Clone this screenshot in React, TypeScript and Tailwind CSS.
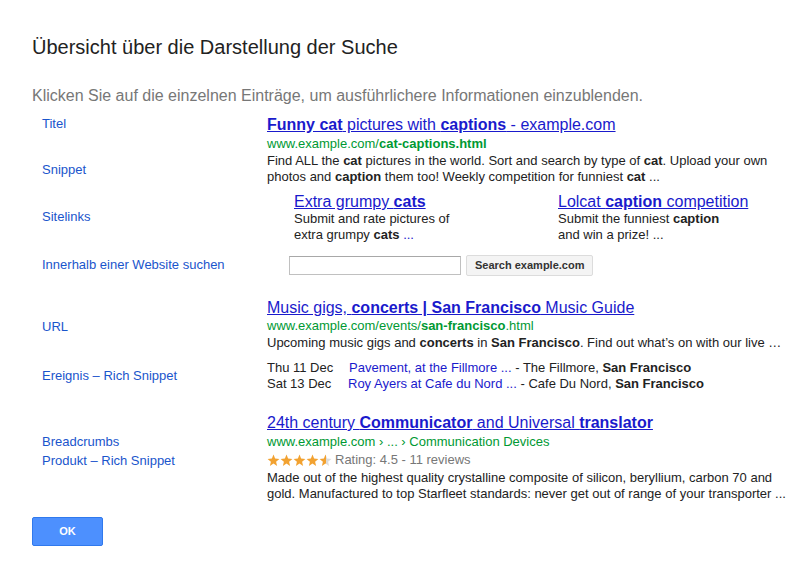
import React from "react"

const font = { fontFamily: '"Liberation Sans", Arial, sans-serif' }

function Star({ fill }: { fill: "full" | "half" | "empty" }) {
  const id = "half-grad"
  const path =
    "M6.5 0.6 L8.1 4.6 L12.4 4.9 L9.1 7.7 L10.1 11.9 L6.5 9.6 L2.9 11.9 L3.9 7.7 L0.6 4.9 L4.9 4.6 Z"
  return (
    <svg width="13" height="12" viewBox="0 0 13 12" className="block">
      {fill === "half" && (
        <defs>
          <linearGradient id={id} x1="0" x2="1" y1="0" y2="0">
            <stop offset="55%" stopColor="#f2a231" />
            <stop offset="55%" stopColor="#dcdcdc" />
          </linearGradient>
        </defs>
      )}
      <path
        d={path}
        fill={fill === "full" ? "#f2a231" : fill === "half" ? `url(#${id})` : "#dcdcdc"}
      />
    </svg>
  )
}

function Label({ children, className = "" }: { children: React.ReactNode; className?: string }) {
  return (
    <div className={`text-[13px] leading-[16px] text-[#1a55cc] whitespace-nowrap ${className}`}>
      {children}
    </div>
  )
}

export default function App() {
  return (
    <div className="w-[802px] h-[580px] bg-white text-[#222] overflow-hidden" style={font}>
      <div className="pl-[32px] pt-[35px]">
        <h1 className="text-[20px] leading-[24px] text-[#222]">
          Übersicht über die Darstellung der Suche
        </h1>
        <p className="mt-[27px] text-[16px] leading-[20px] text-[#777]">
          Klicken Sie auf die einzelnen Einträge, um ausführlichere Informationen einzublenden.
        </p>
      </div>

      <div className="flex mt-[9px]">
        {/* left labels */}
        <div className="w-[267px] pl-[42px] pt-[1px] shrink-0">
          <Label>Titel</Label>
          <Label className="mt-[30px]">Snippet</Label>
          <Label className="mt-[31px]">Sitelinks</Label>
          <Label className="mt-[32px]">Innerhalb einer Website suchen</Label>
          <Label className="mt-[46px]">URL</Label>
          <Label className="mt-[33px]">Ereignis – Rich Snippet</Label>
          <Label className="mt-[50px]">Breadcrumbs</Label>
          <Label className="mt-[3px]">Produkt – Rich Snippet</Label>
        </div>

        {/* right results */}
        <div className="w-[530px] shrink-0">
          {/* result 1 */}
          <a className="block text-[16px] leading-[20px] text-[#1a1acc] underline whitespace-nowrap">
            <b>Funny cat</b> pictures with <b>captions</b> - example.com
          </a>
          <div className="text-[13px] leading-[17px] text-[#009933] whitespace-nowrap">
            www.example.com/<b>cat-captions.html</b>
          </div>
          <div className="mt-[1px] text-[13px] leading-[16px] text-[#222] whitespace-nowrap">
            Find ALL the <b>cat</b> pictures in the world. Sort and search by type of <b>cat</b>. Upload your own
            <br />
            photos and <b>caption</b> them too! Weekly competition for funniest <b>cat</b> ...
          </div>

          {/* sitelinks */}
          <div className="mt-[8px] pl-[27px] grid grid-cols-[264px_240px]">
            <div>
              <a className="block text-[16px] leading-[18px] text-[#1a1acc] underline whitespace-nowrap">
                Extra grumpy <b>cats</b>
              </a>
              <div className="text-[13px] leading-[16px] whitespace-nowrap">
                Submit and rate pictures of
                <br />
                extra grumpy <b>cats</b> <span className="text-[#1a1acc]">...</span>
              </div>
            </div>
            <div>
              <a className="block text-[16px] leading-[18px] text-[#1a1acc] underline whitespace-nowrap">
                Lolcat <b>caption</b> competition
              </a>
              <div className="text-[13px] leading-[16px] whitespace-nowrap">
                Submit the funniest <b>caption</b>
                <br />
                and win a prize! ...
              </div>
            </div>
          </div>

          {/* search box */}
          <div className="mt-[12px] pl-[22px] flex items-center gap-[5px]">
            <div className="w-[172px] h-[19px] border border-[#c0c0c0] border-t-[#a8a8a8] bg-white" />
            <div className="h-[21px] px-[8px] flex items-center border border-[#dcdcdc] rounded-[2px] bg-[#f4f4f4] text-[11px] font-bold text-[#333]">
              Search example.com
            </div>
          </div>

          {/* result 2 */}
          <a className="mt-[22px] block text-[16px] leading-[19px] text-[#1a1acc] underline whitespace-nowrap">
            Music gigs, <b>concerts | San Francisco</b> Music Guide
          </a>
          <div className="text-[13px] leading-[17px] text-[#009933] whitespace-nowrap">
            www.example.com/events/<b>san-francisco</b>.html
          </div>
          <div className="text-[13px] leading-[17px] whitespace-nowrap">
            Upcoming music gigs and <b>concerts</b> in <b>San Francisco</b>. Find out what’s on with our live …
          </div>
          <div className="mt-[9px] text-[13px] leading-[16px] whitespace-nowrap">
            <div className="flex">
              <span className="w-[82px]">Thu 11 Dec</span>
              <span>
                <span className="text-[#1a1acc]">Pavement, at the Fillmore ...</span> - The Fillmore,{" "}
                <b>San Francisco</b>
              </span>
            </div>
            <div className="flex">
              <span className="w-[81px]">Sat 13 Dec</span>
              <span>
                <span className="text-[#1a1acc]">Roy Ayers at Cafe du Nord ...</span> - Cafe Du Nord,{" "}
                <b>San Francisco</b>
              </span>
            </div>
          </div>

          {/* result 3 */}
          <a className="mt-[21px] block text-[16px] leading-[20px] text-[#1a1acc] underline whitespace-nowrap">
            24th century <b>Communicator</b> and Universal <b>translator</b>
          </a>
          <div className="text-[13px] leading-[18px] text-[#009933] whitespace-nowrap">
            www.example.com › ... › Communication Devices
          </div>
          <div className="flex items-center h-[18px] text-[13px] text-[#777] whitespace-nowrap">
            <div className="flex mr-[3px]">
              <Star fill="full" />
              <Star fill="full" />
              <Star fill="full" />
              <Star fill="full" />
              <Star fill="half" />
            </div>
            Rating: 4.5 - 11 reviews
          </div>
          <div className="mt-[1px] text-[13px] leading-[16px] whitespace-nowrap">
            Made out of the highest quality crystalline composite of silicon, beryllium, carbon 70 and
            <br />
            gold. Manufactured to top Starfleet standards: never get out of range of your transporter ...
          </div>
        </div>
      </div>

      <div className="pl-[32px] mt-[15px]">
        <button className="w-[71px] h-[29px] rounded-[2px] border border-[#3079ed] bg-[#4d90fe] text-white text-[11px] font-bold">
          OK
        </button>
      </div>
    </div>
  )
}
